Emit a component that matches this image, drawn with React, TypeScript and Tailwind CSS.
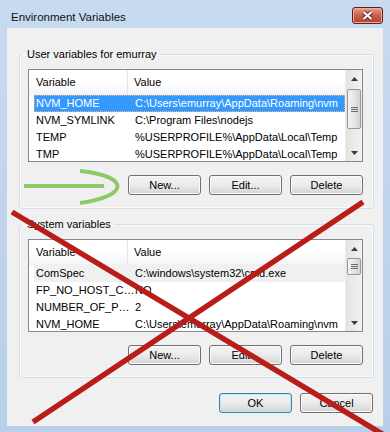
import type { ReactNode } from 'react'

type Row = [string, string]

const userRows: Row[] = [
  ['NVM_HOME', 'C:\\Users\\emurray\\AppData\\Roaming\\nvm'],
  ['NVM_SYMLINK', 'C:\\Program Files\\nodejs'],
  ['TEMP', '%USERPROFILE%\\AppData\\Local\\Temp'],
  ['TMP', '%USERPROFILE%\\AppData\\Local\\Temp'],
]

const systemRows: Row[] = [
  ['ComSpec', 'C:\\windows\\system32\\cmd.exe'],
  ['FP_NO_HOST_C…', 'NO'],
  ['NUMBER_OF_P…', '2'],
  ['NVM_HOME', 'C:\\Users\\emurray\\AppData\\Roaming\\nvm'],
]

function Arrow({ down }: { down?: boolean }) {
  return (
    <svg width="7" height="4" viewBox="0 0 7 4">
      <path d={down ? 'M0 0 H7 L3.5 4 Z' : 'M0 4 H7 L3.5 0 Z'} fill="#3c3c3c" />
    </svg>
  )
}

function Scrollbar({ thumb }: { thumb: string }) {
  return (
    <div className="w-[17px] h-full flex flex-col bg-linear-to-r from-[#e3e3e3] to-[#f2f2f2] border-l border-[#ececec]">
      <div className="h-[17px] flex items-center justify-center">
        <Arrow />
      </div>
      <div
        className={`${thumb} mx-[1px] rounded-[2px] border border-[#979797] bg-linear-to-r from-[#f3f3f3] via-[#e6e6e6] to-[#d3d3d3] flex flex-col items-center justify-center gap-[1px]`}
      >
        <div className="w-[7px] h-[1px] bg-[#6a6a6a]" />
        <div className="w-[7px] h-[1px] bg-[#6a6a6a]" />
        <div className="w-[7px] h-[1px] bg-[#6a6a6a]" />
      </div>
      <div className="flex-1" />
      <div className="h-[17px] flex items-center justify-center">
        <Arrow down />
      </div>
    </div>
  )
}

function ListView({ rows, active, thumb }: { rows: Row[]; active: boolean; thumb: string }) {
  return (
    <div className="w-[335px] h-[93px] border border-[#828790] bg-white flex overflow-hidden">
      <div className="flex-1 flex flex-col overflow-hidden">
        <div className="h-[25px] shrink-0 flex bg-linear-to-b from-white via-white to-[#f4f5f7] border-b border-[#eef0f3]">
          <div className="w-[99px] pl-[7px] flex items-center border-r border-[#e3e5e8]">Variable</div>
          <div className="pl-[6px] flex items-center">Value</div>
        </div>
        {rows.map(([name, value], i) => {
          let rowClass = 'text-black'
          if (i === 0) {
            rowClass = active
              ? 'bg-[#3399ff] text-white outline-1 outline-dotted outline-[#f7b27a] -outline-offset-1'
              : 'bg-[#f0f0f0] text-black'
          }
          return (
            <div key={i} className={`h-[17px] shrink-0 ml-[5px] flex items-center whitespace-nowrap ${rowClass}`}>
              <div className="w-[101px] pl-[2px]">{name}</div>
              <div>{value}</div>
            </div>
          )
        })}
      </div>
      <Scrollbar thumb={thumb} />
    </div>
  )
}

function Button({ children, primary }: { children: ReactNode; primary?: boolean }) {
  return (
    <div
      className={`w-[73px] h-[20px] rounded-[3px] border flex items-center justify-center bg-linear-to-b from-[#f3f3f3] via-[#ebebeb] to-[#d4d4d4] ${
        primary
          ? 'border-[#3c7fb1] shadow-[inset_0_0_0_1px_#bfe3f7]'
          : 'border-[#707070] shadow-[inset_0_0_0_1px_#fbfbfb]'
      }`}
    >
      {children}
    </div>
  )
}

function Group({ title, children, bottom }: { title: string; children: ReactNode; bottom: string }) {
  return (
    <fieldset
      className={`w-[355px] ml-[12px] border border-[#d5dfe5] rounded-[3px] pl-[8px] pr-[10px] pt-[7px] ${bottom} shadow-[inset_0_0_0_1px_#fafafa]`}
    >
      <legend className="-ml-[6px] pl-[5px] pr-[3px] leading-4">{title}</legend>
      {children}
    </fieldset>
  )
}

function ButtonRow() {
  return (
    <div className="mt-[13px] flex justify-end gap-[8px]">
      <Button>New...</Button>
      <Button>Edit...</Button>
      <Button>Delete</Button>
    </div>
  )
}

export default function App() {
  return (
    <div className="relative w-[390px] h-[432px] overflow-hidden bg-linear-to-b from-[#c7dbf0] to-[#b8cfe9] font-['Liberation_Sans',Arial,sans-serif] text-[11px] text-black flex flex-col">
      <div className="h-[28px] shrink-0 flex justify-between">
        <div className="pl-[11px] pt-[9px] text-[11.5px] leading-4 text-[#111]">Environment Variables</div>
        <div className="mt-[7px] mr-[7px] w-[31px] h-[17px] rounded-[3px] border border-[#5b2020] bg-linear-to-b from-[#e4a08f] via-[#cf5a48] to-[#bf3c2c] shadow-[inset_0_0_0_1px_#eab1a5] flex items-center justify-center">
          <svg width="13" height="11" viewBox="0 0 13 11">
            <path d="M2.5 2 L10.5 9 M10.5 2 L2.5 9" stroke="#4a3434" strokeWidth="4.2" />
            <path d="M2.5 2 L10.5 9 M10.5 2 L2.5 9" stroke="#ffffff" strokeWidth="2.2" />
          </svg>
        </div>
      </div>

      <div className="mx-[7px] h-[398px] shrink-0 bg-[#f0f0f0] pt-[18px] flex flex-col">
        <Group title="User variables for emurray" bottom="pb-[13px]">
          <ListView rows={userRows} active thumb="mt-[2px] h-[40px]" />
          <ButtonRow />
        </Group>

        <div className="mt-[7px]">
          <Group title="System variables" bottom="pb-[12px]">
            <ListView rows={systemRows} active={false} thumb="mt-[1px] h-[17px]" />
            <ButtonRow />
          </Group>
        </div>

        <div className="mt-[15px] pr-[10px] flex justify-end gap-[8px]">
          <Button primary>OK</Button>
          <Button>Cancel</Button>
        </div>
      </div>

      <svg className="absolute inset-0 pointer-events-none" width="390" height="432" viewBox="0 0 390 432">
        <path d="M24 186 H104" stroke="#8dc965" strokeWidth="4" fill="none" />
        <path d="M80 171 C130 176 130 196 80 203" stroke="#8dc965" strokeWidth="4" fill="none" />
        <path d="M12 212 L384 435" stroke="#b91d1a" strokeWidth="5.5" />
        <path d="M363 202 L33 422" stroke="#b91d1a" strokeWidth="5.5" />
      </svg>
    </div>
  )
}
